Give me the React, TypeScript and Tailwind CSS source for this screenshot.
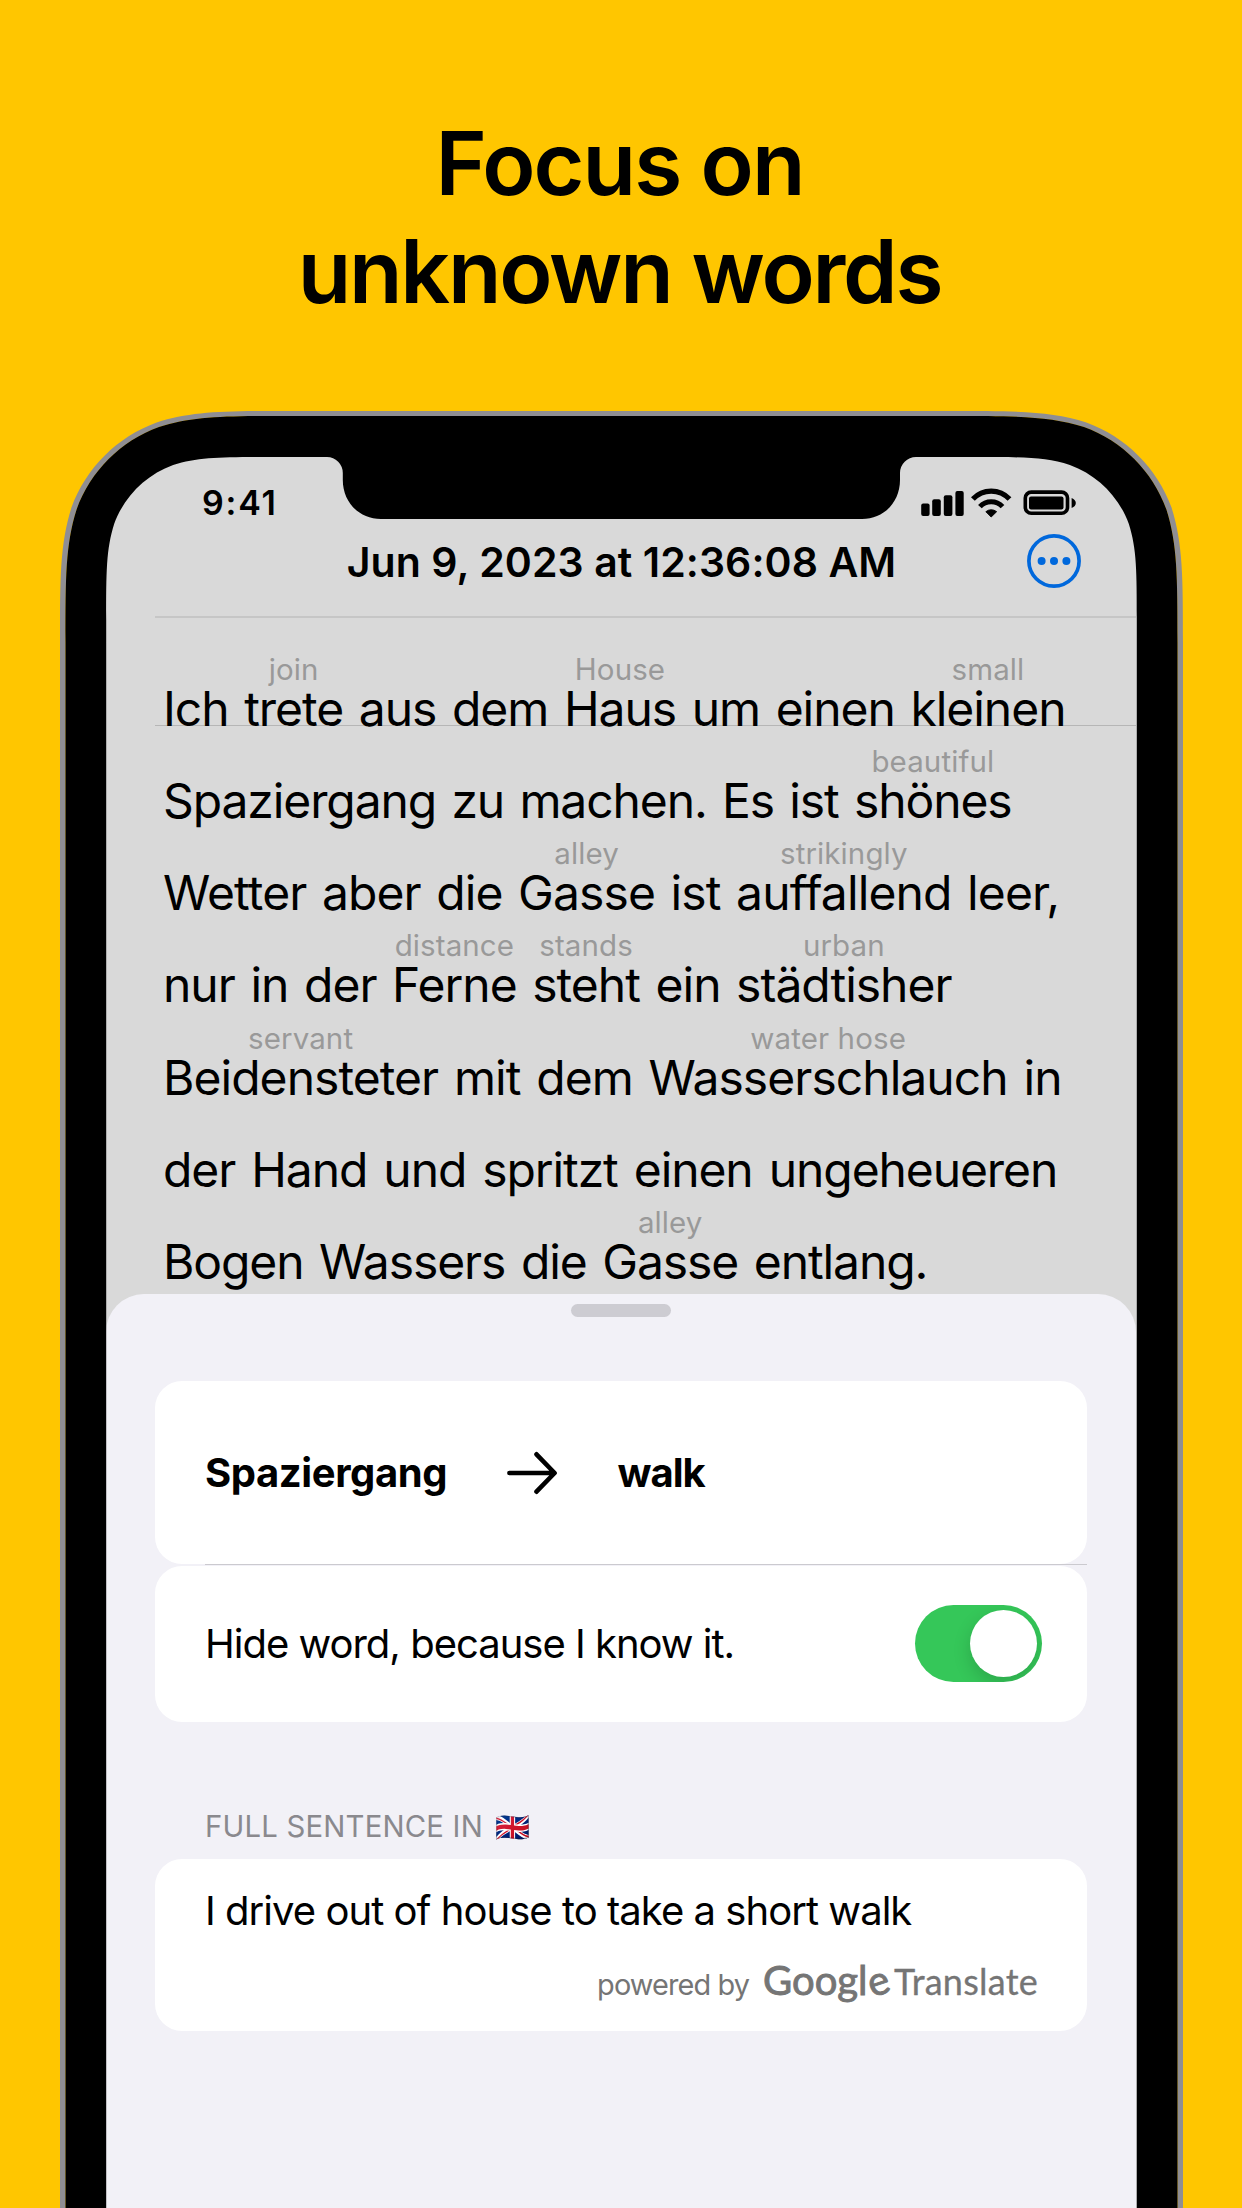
import React from "react";

type Token = string | [word: string, hint: string];

const lines: { spacing: string; tokens: Token[] }[] = [
  {
    spacing: "tracking-[-1.03px] [word-spacing:3.1px]",
    tokens: ["Ich", ["trete", "join"], "aus", "dem", ["Haus", "House"], "um", "einen", ["kleinen", "small"]],
  },
  {
    spacing: "tracking-[-1.1px] [word-spacing:2.9px]",
    tokens: ["Spaziergang", "zu", "machen.", "Es", "ist", ["shönes", "beautiful"]],
  },
  {
    spacing: "tracking-[-0.87px] [word-spacing:2.8px]",
    tokens: ["Wetter", "aber", "die", ["Gasse", "alley"], "ist", ["auffallend", "strikingly"], "leer,"],
  },
  {
    spacing: "tracking-[-1px] [word-spacing:3.1px]",
    tokens: ["nur", "in", "der", ["Ferne", "distance"], ["steht", "stands"], "ein", ["städtisher", "urban"]],
  },
  {
    spacing: "tracking-[-0.95px] [word-spacing:3.2px]",
    tokens: [["Beidensteter", "servant"], "mit", "dem", ["Wasserschlauch", "water hose"], "in"],
  },
  {
    spacing: "tracking-[-1.1px] [word-spacing:3.7px]",
    tokens: ["der", "Hand", "und", "spritzt", "einen", "ungeheueren"],
  },
  {
    spacing: "tracking-[-1.1px] [word-spacing:3.2px]",
    tokens: ["Bogen", "Wassers", "die", ["Gasse", "alley"], "entlang."],
  },
];

/* Top half of a rounded rectangle with continuous-curvature corners, running off the bottom. */
function shell(l: number, t: number, r: number, b: number, q: number) {
  const k = [1.528665 * q, 1.088493 * q, 0.868407 * q, 0.631494 * q, 0.372824 * q, 0.16906 * q, 0.074911 * q];
  return [
    `M${l} ${b}V${t + k[0]}`,
    `C${l} ${t + k[1]} ${l} ${t + k[2]} ${l + k[6]} ${t + k[3]}`,
    `C${l + k[5]} ${t + k[4]} ${l + k[4]} ${t + k[5]} ${l + k[3]} ${t + k[6]}`,
    `C${l + k[2]} ${t} ${l + k[1]} ${t} ${l + k[0]} ${t}`,
    `H${r - k[0]}`,
    `C${r - k[1]} ${t} ${r - k[2]} ${t} ${r - k[3]} ${t + k[6]}`,
    `C${r - k[4]} ${t + k[5]} ${r - k[5]} ${t + k[4]} ${r - k[6]} ${t + k[3]}`,
    `C${r} ${t + k[2]} ${r} ${t + k[1]} ${r} ${t + k[0]}`,
    `V${b}Z`,
  ].join("");
}

function Bezel() {
  const body = shell(5.5, 5, 1117.5, 1800, 148);
  const screen = shell(46.2, 46, 1076.8, 1800, 106);
  return (
    <svg className="pointer-events-none absolute inset-0 z-20" width="1123" height="1797" viewBox="0 0 1123 1797" aria-hidden="true">
      <path fillRule="evenodd" fill="#8f8e93" d={shell(0, 0, 1123, 1800, 153) + body} />
      <path fillRule="evenodd" fill="#000" d={body + screen} />
      <path
        fill="#000"
        d="M266 45V46H267A15.8 16 0 0 1 282.8 62V69C282.8 91 299 108 321 108H802C824 108 840 91 840 69V62A16 16 0 0 1 856 46V45Z"
      />
    </svg>
  );
}

function StatusIcons() {
  return (
    <svg width="155" height="30" viewBox="0 0 155 30" fill="none" aria-hidden="true">
      <g fill="#000">
        <rect x="0.2" y="15.6" width="8.4" height="12.4" rx="2" />
        <rect x="11.2" y="11.2" width="8.6" height="16.8" rx="2" />
        <rect x="22.8" y="7.2" width="8.6" height="20.8" rx="2" />
        <rect x="34.4" y="3" width="8.3" height="25" rx="2" />
        <path d="M64.9 23.7A8.4 8.4 0 0 1 75.6 23.7L70.2 29Z" stroke="#000" strokeWidth="1" strokeLinejoin="round" />
        <rect x="108" y="8.6" width="34.5" height="12.8" rx="2" />
        <path d="M150.6 10C153.4 11 154.8 13 154.8 15S153.4 19 150.6 20Z" />
      </g>
      <path d="M51.9 11A25 25 0 0 1 88.5 11" stroke="#000" strokeWidth="5.2" />
      <path d="M58.9 18.6A15.4 15.4 0 0 1 81.5 18.6" stroke="#000" strokeWidth="5" />
      <rect x="104.3" y="4.1" width="42.2" height="21.2" rx="6" stroke="#000" strokeWidth="3.6" />
    </svg>
  );
}

function MoreIcon() {
  return (
    <svg width="54" height="54" viewBox="0 0 54 54" fill="#0068dc" aria-hidden="true">
      <circle cx="27" cy="27" r="25.1" fill="none" stroke="#0068dc" strokeWidth="3.7" />
      <circle cx="14.6" cy="27" r="4" />
      <circle cx="27" cy="27" r="4" />
      <circle cx="39.4" cy="27" r="4" />
    </svg>
  );
}

function Word({ token }: { token: Token }) {
  if (typeof token === "string") return <>{token}</>;
  return (
    <span className="relative inline-block">
      {token[0]}
      <span className="absolute left-1/2 top-[-9px] -translate-x-1/2 whitespace-nowrap text-[29.5px] leading-[30px] tracking-[0.1px] text-[#999999] [word-spacing:0px]">
        {token[1]}
      </span>
    </span>
  );
}

export default function App() {
  return (
    <div className="h-[2208px] w-[1242px] overflow-hidden bg-[#ffc600] font-['Inter',sans-serif] text-black">
      <h1 className="pr-[3px] pt-[109px] text-center text-[87.5px] font-semibold leading-[108px]">
        <span className="block tracking-[-1.9px]">Focus on</span>
        <span className="block tracking-[-2.2px]">unknown words</span>
      </h1>

      <div className="relative mx-auto mt-[86px] h-[1797px] w-[1123px] px-[46.5px] pt-[46px]">
        <Bezel />
        <div className="flex h-[1751px] flex-col rounded-t-[90px] bg-[#d9d9d9] shadow-[0_0_0_2px_#d9d9d9]">
          <div className="flex h-[63px] shrink-0 items-end justify-between pl-[96px] pr-[60.5px]">
            <span className="text-[34px] font-semibold leading-[34px] tracking-[1.8px]">9:41</span>
            <div className="pb-[2px]">
              <StatusIcons />
            </div>
          </div>

          <div className="grid h-[84px] shrink-0 grid-cols-[1fr_auto_1fr] items-center pl-[56px] pr-[55px]">
            <span />
            <h2 className="text-[41px] font-semibold leading-[84px] tracking-[0.08px]">Jun 9, 2023 at 12:36:08 AM</h2>
            <div className="mb-[2px] justify-self-end">
              <MoreIcon />
            </div>
          </div>
          <div className="ml-[49px] mt-[12px] h-[2px] shrink-0 bg-[#c6c6c6]" />

          <div className="relative h-[675.5px] shrink-0 pl-[57px] pt-[44.8px]">
            <div className="absolute left-[49px] right-0 top-[107px] h-px bg-[#b6b6b6]" />
            {lines.map((line, i) => (
              <p key={i} className={"relative h-[92.2px] whitespace-nowrap text-[48px] leading-[92.2px] " + line.spacing}>
                {line.tokens.map((token, j) => (
                  <React.Fragment key={j}>
                    {j > 0 && " "}
                    <Word token={token} />
                  </React.Fragment>
                ))}
              </p>
            ))}
          </div>

          <div className="relative z-10 flex flex-1 flex-col rounded-t-[38px] bg-[#f2f1f7] px-[49px] pt-[10px]">
            <div className="h-[13px] w-[100px] shrink-0 self-center rounded-full bg-[#cdccd2]" />

            <div className="mt-[64.5px] flex h-[183px] items-center rounded-[27px] bg-white pl-[50px] text-[40px] font-bold leading-[48px]">
              <span className="w-[302px] tracking-[-0.4px]">Spaziergang</span>
              <svg width="50" height="44" viewBox="0 0 50 44" fill="none" stroke="#000" strokeWidth="4.6" strokeLinecap="round" strokeLinejoin="round" aria-hidden="true">
                <path d="M2.4 22H47M29.5 3.3 47.6 22 29.5 40.7" />
              </svg>
              <span className="ml-[60.5px] tracking-[-1px]">walk</span>
            </div>
            <div className="mb-[0.5px] ml-[50px] h-px bg-[#cbcacf]" />
            <div className="flex h-[156px] items-center justify-between rounded-[27px] bg-white pl-[50px] pr-[45px]">
              <span className="pt-px text-[40px] leading-[48px] tracking-[-1px]">Hide word, because I know it.</span>
              <div className="mb-[0.5px] flex h-[77px] w-[127px] items-center justify-end overflow-hidden rounded-full bg-[#35c759] p-[5px]">
                <div className="size-[67px] rounded-full bg-white shadow-[0_7px_18px_rgba(0,0,0,0.16)]" />
              </div>
            </div>

            <div className="mt-[87px] flex h-[36px] items-center pl-[50px] text-[29.3px] leading-[36px] text-[#8a898e]">
              <span className="tracking-[0.2px]">FULL SENTENCE IN</span>
              <span className="ml-[12px] text-[28px]">🇬🇧</span>
            </div>
            <div className="mt-[14px] h-[172.5px] rounded-[27px] bg-white pl-[50px] pr-[49px] pt-[28px]">
              <p className="text-[40px] leading-[48px] tracking-[-0.96px]">I drive out of house to take a short walk</p>
              <div className="mt-[21.5px] flex items-baseline justify-end text-[#757575]">
                <span className="text-[28.9px] leading-[48px] tracking-[-0.9px]">powered by</span>
                <span className="ml-[14px] font-['Lato',sans-serif] text-[40px] font-normal leading-[48px] tracking-[0px] [-webkit-text-stroke:0.9px_#757575]">
                  Googl<span className="inline-block -rotate-[18deg]">e</span>
                </span>
                <span className="ml-[5.5px] font-['Lato',sans-serif] text-[36px] leading-[48px] tracking-[0.25px] [-webkit-text-stroke:0.3px_#757575]">Translate</span>
              </div>
            </div>
          </div>
        </div>
      </div>
    </div>
  );
}
